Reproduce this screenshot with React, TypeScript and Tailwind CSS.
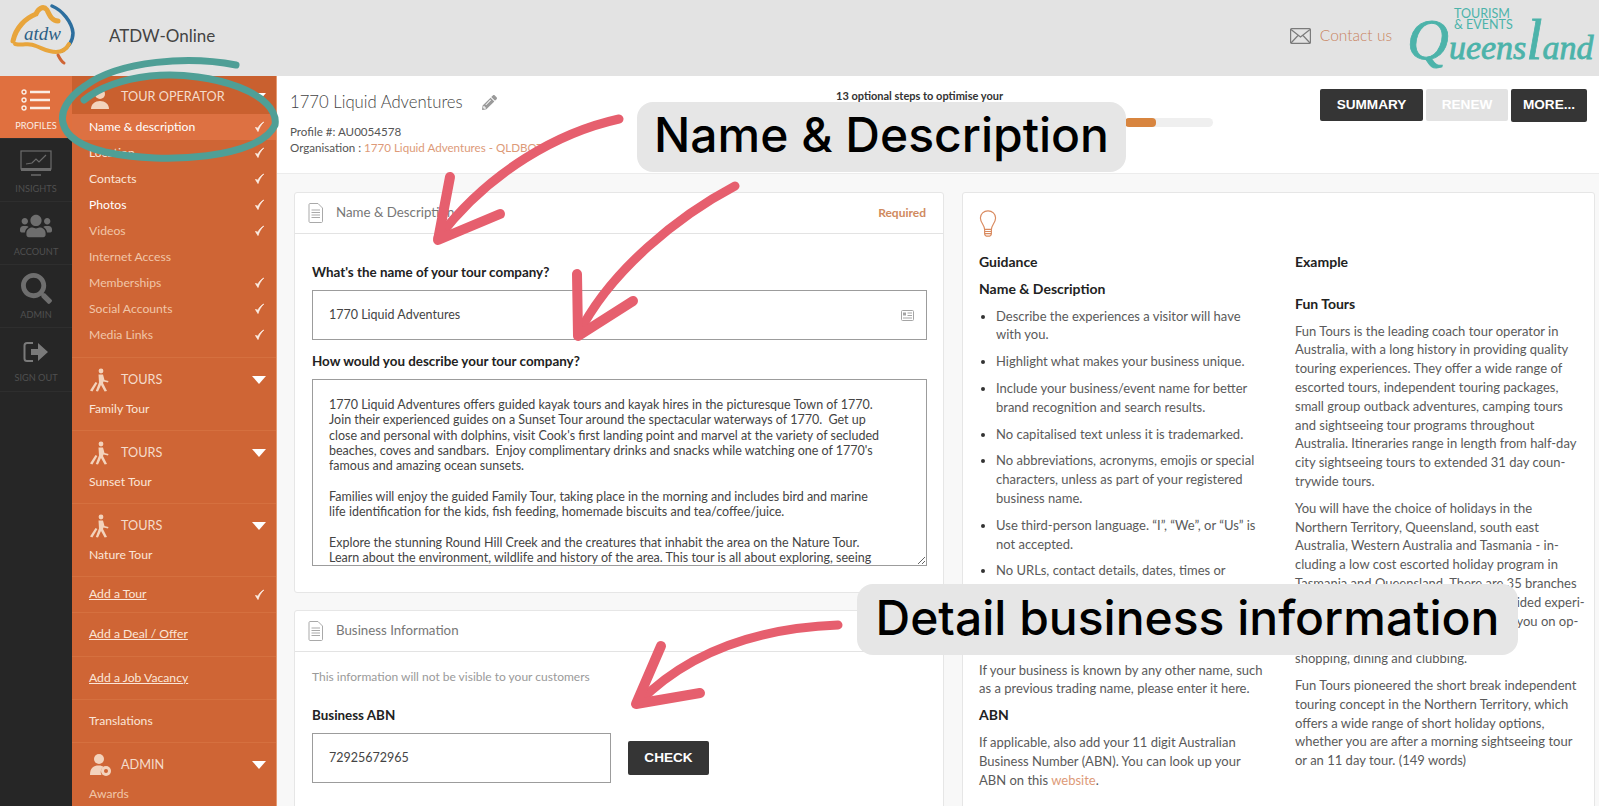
import React from 'react';
import { FaPencilAlt, FaSearch, FaUsers } from 'react-icons/fa';

const lato = "font-['Lato','Liberation_Sans',sans-serif]";

const Check = () => (
  <svg width="11" height="12" viewBox="0 0 11 12" className="text-[#fbeee4]">
    <path d="M1.5 6.5 L4 10.5 C5 7 7 3.5 9.8 1 C7 2.5 5 5 3.9 7.2 Z" fill="currentColor" stroke="currentColor" strokeWidth="0.8" strokeLinejoin="round" />
  </svg>
);

const Caret = () => (
  <svg width="14" height="8" viewBox="0 0 14 8" className="text-white">
    <path d="M0 0 H14 L7 8 Z" fill="currentColor" />
  </svg>
);

const Walker = () => (
  <svg width="22" height="24" viewBox="0 0 22 24" className="text-[#f3d3bc]" fill="currentColor">
    <circle cx="12" cy="3" r="2.4" />
    <path d="M9.5 6.5 H14 L15.5 12 L19.5 13 L19 14.4 L14.5 13.6 L14 15 L18 23 L15.6 23.5 L12 17 L9 23.5 L6.8 23 L10 14.5 Z" />
    <path d="M6.5 14 L8.4 15 L3.4 23.4 L1 22.4 Z" />
  </svg>
);

const Operator = () => (
  <svg width="22" height="24" viewBox="0 0 22 24" className="text-[#f3d3bc]" fill="currentColor">
    <circle cx="11" cy="9" r="5" />
    <path d="M2 24 C2 19 6 16 11 16 C16 16 20 19 20 24 Z" />
    <path d="M6 9 C6 4 10 3 14 4" stroke="currentColor" fill="none" strokeWidth="1" />
  </svg>
);

const AdminIcon = () => (
  <svg width="23" height="24" viewBox="0 0 23 24" className="text-[#f3d3bc]" fill="currentColor">
    <circle cx="10" cy="6" r="5" />
    <path d="M1 22 C1 15 4 12.5 10 12.5 C12 12.5 13.5 13 14.5 14 C12 15.5 11 19 12.5 22 Z" />
    <circle cx="17" cy="18" r="5" />
    <circle cx="17" cy="18" r="2" fill="#cf6535" />
  </svg>
);

const sideSub = [
  { label: 'Location', tone: 'text-[#fbe6d8]', done: true },
  { label: 'Contacts', tone: 'text-[#fbe6d8]', done: true },
  { label: 'Photos', tone: 'text-white', done: true },
  { label: 'Videos', tone: 'text-[#f1c5a8]', done: true },
  { label: 'Internet Access', tone: 'text-[#f1c5a8]', done: false },
  { label: 'Memberships', tone: 'text-[#f1c5a8]', done: true },
  { label: 'Social Accounts', tone: 'text-[#f1c5a8]', done: true },
  { label: 'Media Links', tone: 'text-[#f1c5a8]', done: true },
];

const GroupHead = ({ icon, label }: { icon: React.ReactNode; label: string }) => (
  <div className="flex h-[42px] items-center pl-[17px] pr-[10px] pt-[2px]">
    <div className="w-[32px]">{icon}</div>
    <span className="flex-1 text-[12.700px] text-[#f5dccb]">{label}</span>
    <Caret />
  </div>
);

const TourGroup = ({ name }: { name: string }) => (
  <div className="h-[73px] border-b border-[#d5703f]">
    <GroupHead icon={<Walker />} label="TOURS" />
    <div className="pl-[17px] text-[12.200px] leading-[18px] text-[#fbe6d8]">{name}</div>
  </div>
);

const LinkRow = ({ label, h, check }: { label: string; h: string; check?: boolean }) => (
  <div className={`flex items-center justify-between border-b border-[#d5703f] pl-[17px] pr-[11px] text-[12.200px] text-[#fbe6d8] ${h}`}>
    <span className="underline">{label}</span>
    {check && <Check />}
  </div>
);

const Sidebar = () => (
  <aside className="h-full w-[205px] shrink-0 overflow-hidden border-r border-[#e59a72] bg-[#cf6535]">
    <div className="flex h-[38px] items-center bg-[#c9602f] pl-[17px] pr-[10px] pt-[3px]">
      <div className="w-[32px]"><Operator /></div>
      <span className="flex-1 text-[12.700px] text-[#f5dccb]">TOUR OPERATOR</span>
      <Caret />
    </div>
    <div className="flex h-[26px] items-center justify-between bg-[#dd7142] pl-[17px] pr-[11px] text-[12.200px] text-white">
      <span>Name &amp; description</span>
      <Check />
    </div>
    <div className="border-b border-[#d5703f] pb-[9px]">
      {sideSub.map((item) => (
        <div key={item.label} className={`flex h-[26px] items-center justify-between pl-[17px] pr-[11px] text-[12.200px] ${item.tone}`}>
          <span>{item.label}</span>
          {item.done && <Check />}
        </div>
      ))}
    </div>
    <TourGroup name="Family Tour" />
    <TourGroup name="Sunset Tour" />
    <TourGroup name="Nature Tour" />
    <LinkRow label="Add a Tour" h="h-[36px]" check />
    <LinkRow label="Add a Deal / Offer" h="h-[44px]" />
    <LinkRow label="Add a Job Vacancy" h="h-[43px]" />
    <div className="flex h-[43px] items-center border-b border-[#d5703f] pl-[17px] text-[12.200px] text-[#fbe6d8]">Translations</div>
    <GroupHead icon={<AdminIcon />} label="ADMIN" />
    <div className="pl-[17px] text-[12.200px] leading-[18px] text-[#f1c5a8]">Awards</div>
  </aside>
);

const RailItem = ({ icon, label, active, h }: { icon: React.ReactNode; label: string; active?: boolean; h: string }) => (
  <div className={`flex flex-col items-center justify-center gap-[3px] border-b border-[#2e2e2e] ${h} ${active ? 'bg-[#e0703f] text-[#fbeee4]' : 'text-[#505050]'}`}>
    <div className="flex h-[34px] items-center justify-center">{icon}</div>
    <span className="text-[9.200px] leading-[12px]">{label}</span>
  </div>
);

const Rail = () => (
  <nav className="h-full w-[72px] shrink-0 bg-[#262626]">
    <RailItem
      h="h-[63px]"
      active
      label="PROFILES"
      icon={
        <svg width="30" height="22" viewBox="0 0 30 22" fill="none" stroke="currentColor">
          <circle cx="3" cy="3" r="2" strokeWidth="1.4" />
          <circle cx="3" cy="11" r="2" strokeWidth="1.4" />
          <circle cx="3" cy="19" r="2" strokeWidth="1.4" />
          <path d="M9 3H29M9 11H29M9 19H29" strokeWidth="2.4" />
        </svg>
      }
    />
    <RailItem
      h="h-[63px]"
      label="INSIGHTS"
      icon={
        <svg width="32" height="26" viewBox="0 0 32 26" fill="none" stroke="#6b6b6b">
          <rect x="1" y="1" width="30" height="18" strokeWidth="1.2" />
          <path d="M1 19.5H31" strokeWidth="3" />
          <path d="M6 14L12 13L16 9L19 12L26 5" strokeWidth="1.2" />
          <path d="M11 25H21" strokeWidth="1.5" />
        </svg>
      }
    />
    <RailItem h="h-[63px]" label="ACCOUNT" icon={<FaUsers size={32} className="text-[#6e6e6e]" />} />
    <RailItem h="h-[63px]" label="ADMIN" icon={<FaSearch size={31} className="text-[#6e6e6e]" />} />
    <RailItem
      h="h-[64px]"
      label="SIGN OUT"
      icon={
        <svg width="26" height="22" viewBox="0 0 26 22">
          <path d="M10 2H4C2.5 2 1.500 3 1.500 4.500V17.500C1.500 19 2.500 20 4 20H10" fill="none" stroke="#7a7a7a" strokeWidth="2" />
          <path d="M8 8H15V2L25 11L15 20V14H8Z" fill="#7a7a7a" />
        </svg>
      }
    />
  </nav>
);

const AtdwLogo = () => (
  <svg width="66" height="68" viewBox="0 0 66 68" fill="none">
    <path d="M3 39 C6 25 16 16 26 12 C28 7 33 3 37 8 C40 14 42 19 48 19" stroke="#e8a53c" strokeWidth="5" strokeLinecap="round" />
    <path d="M42 4 C52 8 62 20 63 31 C63 39 58 46 52 49" stroke="#2c6e9e" strokeWidth="3.500" strokeLinecap="round" />
    <path d="M5 42 C15 44 18 40 26 44 C34 47 38 50 46 50 C52 50 56 48 59 42" stroke="#e8a53c" strokeWidth="4" strokeLinecap="round" />
    <path d="M48 53 C50 57 52 60 54 61" stroke="#cf6535" strokeWidth="3" strokeLinecap="round" />
    <text x="14" y="38" fontFamily="Liberation Serif" fontStyle="italic" fontSize="19" fill="#2d5f86">atdw</text>
  </svg>
);

const QldLogo = () => (
  <svg width="186" height="62" viewBox="0 0 186 62" className="overflow-visible text-[#4cb3aa]">
    <text x="47" y="13" fontFamily="Lato" fontSize="12.500" fill="currentColor">TOURISM</text>
    <text x="47" y="24" fontFamily="Lato" fontSize="12.500" fill="currentColor">&amp; EVENTS</text>
    <text x="0" y="54" fontFamily="Liberation Serif" fontStyle="italic" fill="currentColor" stroke="currentColor" strokeWidth="0.800">
      <tspan fontSize="58">Q</tspan>
      <tspan fontSize="34">ueens</tspan>
      <tspan fontSize="58">l</tspan>
      <tspan fontSize="34">and</tspan>
    </text>
  </svg>
);

const Header = () => (
  <header className="flex h-[76px] shrink-0 items-center bg-[#e3e3e3] pb-[4px] pl-[10px] pr-[6px]">
    <AtdwLogo />
    <span className="ml-[33px] text-[17px] text-[#444]">ATDW-Online</span>
    <div className="ml-auto flex items-center">
      <svg width="21" height="16" viewBox="0 0 21 16" fill="none" stroke="#7b7b7b" strokeWidth="1.200">
        <rect x="0.600" y="0.600" width="19.800" height="14.800" rx="1" />
        <path d="M1 1.500L10.500 9L20 1.500M1 15L8 7.500M20 15L13 7.500" />
      </svg>
      <span className="ml-[9px] text-[15.500px] font-light text-[#c9835f]">Contact us</span>
      <div className="ml-[15px]"><QldLogo /></div>
    </div>
  </header>
);

const SubHeader = () => (
  <div className="flex h-[98px] shrink-0 border-b border-[#ececec] bg-white pl-[13px] pr-[12px] pt-[13px]">
    <div className="w-[546px]">
      <div className="flex items-center">
        <span className="text-[16.700px] font-light leading-[26px] text-[#444]">1770 Liquid Adventures</span>
        <FaPencilAlt size={15} className="ml-[19px] text-[#9a9a9a]" />
      </div>
      <div className="mt-[9px] text-[11.600px] leading-[16px] text-[#555]">Profile #: AU0054578</div>
      <div className="text-[11.600px] leading-[16px] text-[#555]">
        Organisation : <span className="text-[#dd9a78]">1770 Liquid Adventures - QLDBOT</span>
      </div>
    </div>
    <div className="w-[377px]">
      <div className="text-[11px] font-bold leading-[14px] text-[#333]">13 optional steps to optimise your</div>
      <div className="ml-[289px] mt-[15px] h-[9px] w-[88px] rounded-full bg-[#efefef]">
        <div className="h-full w-[31px] rounded-sm bg-[#d8853f]" />
      </div>
    </div>
    <div className="ml-auto flex items-start gap-[3px] font-['Liberation_Sans',sans-serif] text-[13.600px] font-bold text-white">
      <div className="flex h-[32px] w-[103px] items-center justify-center rounded-[2px] bg-[#353535]">SUMMARY</div>
      <div className="flex h-[32px] w-[82px] items-center justify-center rounded-[2px] bg-[#e2e2e2]">RENEW</div>
      <div className="flex h-[33px] w-[76px] items-center justify-center rounded-[2px] bg-[#353535]">MORE...</div>
    </div>
  </div>
);

const DocIcon = () => (
  <svg width="15" height="20" viewBox="0 0 15 20" fill="none" stroke="#a9a9a9" strokeWidth="1">
    <path d="M1 1.500C1 1 1.500 0.500 2 0.500H10L14.500 5V18.500C14.500 19 14 19.500 13.500 19.500H2C1.500 19.500 1 19 1 18.500Z" />
    <path d="M3.500 7H12M3.500 9.500H12M3.500 12H12M3.500 14.500H12" />
  </svg>
);

const PanelHead = ({ title, right }: { title: string; right?: string }) => (
  <div className="flex h-[41px] items-center border-b border-[#e3e3e3] pl-[13px] pr-[17px]">
    <DocIcon />
    <span className="ml-[13px] text-[13.300px] text-[#777]">{title}</span>
    {right && <span className="ml-auto text-[12px] font-bold text-[#d08a5e]">{right}</span>}
  </div>
);

const description = `1770 Liquid Adventures offers guided kayak tours and kayak hires in the picturesque Town of 1770.
Join their experienced guides on a Sunset Tour around the spectacular waterways of 1770.  Get up
close and personal with dolphins, visit Cook's first landing point and marvel at the variety of secluded
beaches, coves and sandbars.  Enjoy complimentary drinks and snacks while watching one of 1770's
famous and amazing ocean sunsets.

Families will enjoy the guided Family Tour, taking place in the morning and includes bird and marine
life identification for the kids, fish feeding, homemade biscuits and tea/coffee/juice.

Explore the stunning Round Hill Creek and the creatures that inhabit the area on the Nature Tour.
Learn about the environment, wildlife and history of the area. This tour is all about exploring, seeing`;

const FormColumn = () => (
  <div className="w-[650px] shrink-0">
    <section className="h-[401px] rounded-[3px] border border-[#e6e6e6] bg-white">
      <PanelHead title="Name & Description" right="Required" />
      <div className="pl-[17px] pr-[16px] pt-[30px]">
        <label className="block text-[13.400px] font-bold leading-[17px] text-[#222]">What's the name of your tour company?</label>
        <div className="mt-[9px] flex h-[50px] items-center justify-between border border-[#9c9c9c] pl-[16px] pr-[12px] text-[12.500px] text-[#444]">
          <span>1770 Liquid Adventures</span>
          <svg width="13" height="11" viewBox="0 0 13 11" fill="none" stroke="#a5a5a5">
            <rect x="0.500" y="0.500" width="12" height="10" rx="1" />
            <rect x="2" y="2.500" width="3" height="3" fill="#a5a5a5" stroke="none" />
            <path d="M6.500 3H11M6.500 5.500H11M2 8H11" />
          </svg>
        </div>
        <label className="mt-[13px] block text-[13.400px] font-bold leading-[17px] text-[#222]">How would you describe your tour company?</label>
        <textarea
          readOnly
          defaultValue={description}
          className={`mt-[9px] block h-[187px] w-full overflow-hidden border border-[#9c9c9c] pl-[16px] pr-[30px] pt-[17px] text-[12.500px] leading-[15.300px] text-[#444] ${lato}`}
        />
      </div>
    </section>
    <section className="mt-[17px] h-[300px] rounded-[3px] border border-[#e6e6e6] bg-white">
      <PanelHead title="Business Information" />
      <div className="pl-[17px] pr-[16px] pt-[17px]">
        <p className="text-[12px] leading-[16px] text-[#9a9a9a]">This information will not be visible to your customers</p>
        <label className="mt-[22px] block text-[13.400px] font-bold leading-[17px] text-[#222]">Business ABN</label>
        <div className="mt-[9px] flex items-center">
          <div className="flex h-[50px] w-[299px] items-center border border-[#9c9c9c] pl-[16px] text-[12.500px] text-[#444]">72925672965</div>
          <div className="ml-[17px] flex h-[34px] w-[81px] items-center justify-center rounded-[2px] bg-[#353535] font-['Liberation_Sans',sans-serif] text-[13.600px] font-bold text-white">CHECK</div>
        </div>
      </div>
    </section>
  </div>
);

const guidanceList = [
  ['Describe the experiences a visitor will have', 'with you.'],
  ['Highlight what makes your business unique.'],
  ['Include your business/event name for better', 'brand recognition and search results.'],
  ['No capitalised text unless it is trademarked.'],
  ['No abbreviations, acronyms, emojis or special', 'characters, unless as part of your registered', 'business name.'],
  ['Use third-person language. “I”, “We”, or “Us” is', 'not accepted.'],
  ['No URLs, contact details, dates, times or', 'prices.'],
];

const exampleParas = [
  ['Fun Tours is the leading coach tour operator in', 'Australia, with a long history in providing quality', 'touring experiences. They offer a wide range of', 'escorted tours, independent touring packages,', 'small group outback adventures, camping tours', 'and sightseeing tour programs throughout', 'Australia. Itineraries range in length from half-day', 'city sightseeing tours to extended 31 day coun-', 'trywide tours.'],
  ['You will have the choice of holidays in the', 'Northern Territory, Queensland, south east', 'Australia, Western Australia and Tasmania - in-', 'cluding a low cost escorted holiday program in', 'Tasmania and Queensland. There are 35 branches', 'throughout the country, each with a guided experi-', 'ences, and friendly staff here to advise you on op-', 'tional tours, attractions, sailing, fishing,', 'shopping, dining and clubbing.'],
  ['Fun Tours pioneered the short break independent', 'touring concept in the Northern Territory, which', 'offers a wide range of short holiday options,', 'whether you are after a morning sightseeing tour', 'or an 11 day tour. (149 words)'],
];

const Lines = ({ lines }: { lines: string[] }) => (
  <>
    {lines.map((l) => (
      <span key={l} className="block whitespace-nowrap">{l}</span>
    ))}
  </>
);

const GuidancePanel = () => (
  <section className="ml-[18px] min-h-[700px] flex-1 rounded-[3px] border border-[#e6e6e6] bg-white pl-[16px] pt-[17px] text-[13px] leading-[18.800px] text-[#5a5a5a]">
    <svg width="18" height="27" viewBox="0 0 20 32" fill="none" stroke="#d98a5f" strokeWidth="1.400">
      <path d="M6 23C6 18 1 15 1 9.500C1 4.500 5 1 10 1C15 1 19 4.500 19 9.500C19 15 14 18 14 23Z" />
      <path d="M6 23V28C6 30 8 31 10 31C12 31 14 30 14 28V23M6 25.500H14M6 28H14" />
    </svg>
    <div className="mt-[16px] grid grid-cols-[316px_1fr]">
      <div>
        <h4 className="mb-[8px] text-[14px] font-bold text-[#222]">Guidance</h4>
        <h4 className="mb-[8px] text-[14px] font-bold text-[#222]">Name &amp; Description</h4>
        <ul className="list-disc pl-[17px] marker:text-[#333]">
          {guidanceList.map((item) => (
            <li key={item[0]} className="mb-[8px]"><Lines lines={item} /></li>
          ))}
        </ul>
        <h4 className="mb-[8px] text-[14px] font-bold text-[#222]">Business Information</h4>
        <h4 className="mb-[8px] text-[14px] font-bold text-[#222]">Business Name</h4>
        <p className="mb-[8px]">
          <Lines lines={['If your business is known by any other name, such', 'as a previous trading name, please enter it here.']} />
        </p>
        <h4 className="mb-[8px] text-[14px] font-bold text-[#222]">ABN</h4>
        <p>
          <span className="block">If applicable, also add your 11 digit Australian</span>
          <span className="block">Business Number (ABN). You can look up your</span>
          <span className="block">ABN on this <span className="text-[#dd9a78]">website</span>.</span>
        </p>
      </div>
      <div>
        <h4 className="text-[14px] font-bold text-[#222]">Example</h4>
        <h4 className="mb-[8px] mt-[23px] text-[14px] font-bold text-[#222]">Fun Tours</h4>
        {exampleParas.map((p) => (
          <p key={p[0]} className="mb-[8px]"><Lines lines={p} /></p>
        ))}
      </div>
    </div>
  </section>
);

// hand-drawn marks laid over the screenshot
const Annotations = () => (
  <svg className="pointer-events-none absolute left-0 top-0" width="1599" height="806" fill="none" strokeLinecap="round" strokeLinejoin="round">
    <path d="M236 65C190 56 120 60 85 86C50 110 55 140 105 152C165 165 260 158 275 125C280 95 215 70 150 76C125 79 100 87 84 100" stroke="#4f9f96" strokeWidth="7" />
    <g stroke="#e65f6e">
      <path d="M619 119C560 132 490 170 438 238" strokeWidth="9" />
      <path d="M450 177L438 240L500 214" strokeWidth="10" />
      <path d="M735 186C680 215 610 270 578 335" strokeWidth="9" />
      <path d="M577 274L578 336L633 301" strokeWidth="10" />
      <path d="M838 625C760 628 690 650 638 703" strokeWidth="9" />
      <path d="M661 646L636 704L700 693" strokeWidth="10" />
    </g>
  </svg>
);

const Pill = ({ text, className }: { text: string; className: string }) => (
  <div className={`absolute flex items-center justify-center rounded-[16px] bg-[#e6e6e6] pb-[4px] font-['Inter',sans-serif] font-medium text-black ${className}`}>{text}</div>
);

export default function App() {
  return (
    <div className={`relative flex h-[806px] w-[1599px] flex-col overflow-hidden bg-white ${lato}`}>
      <Header />
      <div className="flex min-h-0 flex-1">
        <Rail />
        <Sidebar />
        <main className="flex min-w-0 flex-1 flex-col bg-[#f8f8f8]">
          <SubHeader />
          <div className="flex items-start pl-[17px] pr-[4px] pt-[18px]">
            <FormColumn />
            <GuidancePanel />
          </div>
        </main>
      </div>
      <Annotations />
      <Pill text="Name & Description" className="left-[637px] top-[102px] h-[70px] w-[489px] text-[48px]" />
      <Pill text="Detail business information" className="left-[857px] top-[584px] h-[71px] w-[661px] text-[48px]" />
    </div>
  );
}
